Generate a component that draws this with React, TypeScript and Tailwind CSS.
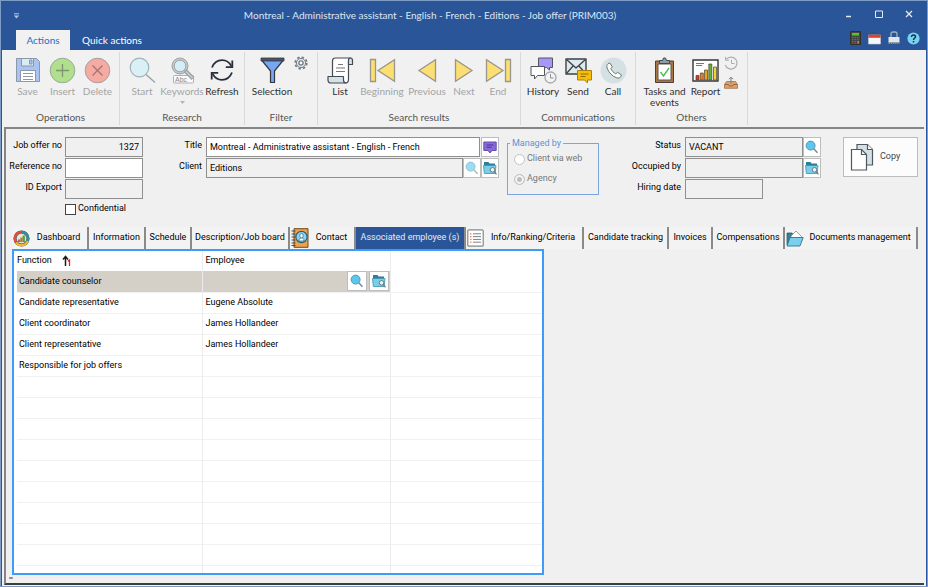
import React from 'react';

const UI = "font-['Lato','Open_Sans',sans-serif]";
const FORM = "font-['Roboto','Noto_Sans',sans-serif]";

/* ---------- icons ---------- */

function SaveIcon() {
  return (
    <svg width="26" height="27" viewBox="0 0 26 27" fill="none" stroke="#8c97a8">
      <path d="M1.5 1.5h20l3 3v20h-23z" fill="#a9c3f2" />
      <path d="M6.500 1.500h12v7.500h-12z" fill="#dcecf2" />
      <path d="M14.500 3h2.500v4h-2.500z" fill="#a9c3f2" />
      <path d="M5.500 13.500h15v11h-15z" fill="#fff" />
      <path d="M8 16.500h10M8 19.500h10M8 22.500h10" />
    </svg>
  );
}

function InsertIcon() {
  return (
    <svg width="27" height="27" viewBox="0 0 27 27" fill="none">
      <circle cx="13.500" cy="13.500" r="12.300" fill="#b0e08e" stroke="#9aa79a" />
      <path d="M13.500 7v13M7 13.500h13" stroke="#7d9570" strokeWidth="1.300" />
    </svg>
  );
}

function DeleteIcon() {
  return (
    <svg width="27" height="27" viewBox="0 0 27 27" fill="none">
      <circle cx="13.500" cy="13.500" r="12.300" fill="#f5aaa2" stroke="#aa9c9c" />
      <path d="M8.500 8.500l10 10M18.500 8.500l-10 10" stroke="#a07575" strokeWidth="1.300" />
    </svg>
  );
}

function StartIcon() {
  return (
    <svg width="27" height="27" viewBox="0 0 27 27" fill="none">
      <path d="M17 17.500l9 8" stroke="#9aa5ab" strokeWidth="1.500" />
      <circle cx="10.500" cy="10.500" r="9.300" fill="#d8f0f6" stroke="#9fb2ba" strokeWidth="1.200" />
    </svg>
  );
}

function KeywordsIcon() {
  return (
    <svg width="27" height="27" viewBox="0 0 27 27" fill="none">
      <circle cx="11" cy="9" r="8" fill="#c3c8cb" stroke="#a0a6aa" />
      <circle cx="11" cy="9" r="5.800" fill="#d3eef6" stroke="#a0a6aa" />
      <rect x="4.500" y="18.500" width="20" height="7.500" rx="1" fill="#fafafa" stroke="#b0b0b0" />
      <text x="6" y="25" fontSize="7" fill="#888" fontFamily="Liberation Sans, sans-serif">Abc</text>
      <path d="M16 13.500l8 8" stroke="#9da2a5" strokeWidth="4" />
      <path d="M17 14.500l6.500 6.500" stroke="#c9cdcf" strokeWidth="1.500" />
    </svg>
  );
}

function RefreshIcon() {
  return (
    <svg width="24" height="24" viewBox="0 0 24 24" fill="none" stroke="#27303a" strokeWidth="1.800">
      <path d="M2 9.500C4 4.500 8 2.200 12 2.200c4.200 0 7.500 2.300 9.300 6" />
      <path d="M22.300 2.500v6.700h-6.500" />
      <path d="M22 14.500c-2 5-6 7.300-10 7.300-4.200 0-7.500-2.300-9.300-6" />
      <path d="M1.700 21.500v-6.700h6.500" />
    </svg>
  );
}

function FilterIcon() {
  return (
    <svg width="25" height="27" viewBox="0 0 25 27" fill="none" stroke="#35383f" strokeLinejoin="round">
      <path d="M2 3.500h21l-8.500 10.500v11.500h-4V14z" fill="#76a7f2" strokeWidth="1.200" />
      <path d="M1 1h23v3H1z" fill="#4a5468" strokeWidth=".8" />
    </svg>
  );
}

function GearIcon() {
  return (
    <svg width="14" height="14" viewBox="0 0 14 14" fill="none" stroke="#737b82">
      <circle cx="7" cy="7" r="5.800" strokeWidth="1.700" strokeDasharray="2.400 2.150" />
      <circle cx="7" cy="7" r="4.600" fill="#e4ebee" strokeWidth="1" />
      <circle cx="7" cy="7" r="2.100" fill="#fff" strokeWidth="1.400" />
    </svg>
  );
}

function ListIcon() {
  return (
    <svg width="27" height="27" viewBox="0 0 27 27" fill="none" stroke="#454b52" strokeWidth="1.200" strokeLinejoin="round">
      <path d="M5.500 19V4c0-2 1-3 3-3h15c-1.500.5-2 1.500-2 3v18c0 2.500-1 4-3 4z" fill="#fff" />
      <path d="M21.500 7.500h4V3.500c0-1.500-.8-2.500-2-2.500s-2 1-2 2.500z" fill="#d5e1e6" />
      <path d="M1 19.500h15.500V23c0 1.800.8 3 2.500 3H4c-2 0-3-1-3-3z" fill="#d5e1e6" />
      <path d="M11 7.500h5M9 11h9M9 14.500h9" stroke="#777" />
    </svg>
  );
}

function NavIcon({ kind }: { kind: 'first' | 'prev' | 'next' | 'last' }) {
  const bar = kind === 'first' || kind === 'last';
  const flip = kind === 'next' || kind === 'last';
  return (
    <svg width={bar ? 27 : 20} height="25" viewBox={bar ? '0 0 27 25' : '7 0 20 25'} fill="#fbdf72" stroke="#99968c" strokeWidth="1.300">
      <g transform={flip ? (bar ? 'matrix(-1 0 0 1 27 0)' : 'matrix(-1 0 0 1 34 0)') : undefined}>
        {bar && <path d="M1.500 1.500h5v22h-5z" />}
        <path d="M25.500 1.800v21.400L9 12.500z" />
      </g>
    </svg>
  );
}

function HistoryIcon() {
  return (
    <svg width="27" height="27" viewBox="0 0 27 27" fill="none" stroke="#50565c" strokeLinejoin="round">
      <path d="M8.500 1h14v9.500h-3v2.500l-3-2.500h-8z" fill="#a996fa" />
      <path d="M1 9.500h13.500v9H7.500l-3 3.500v-3.500H1z" fill="#fff" />
      <circle cx="20.500" cy="20.500" r="5.500" fill="#f3f3f3" stroke="#a3a8ac" strokeWidth="1.300" />
      <path d="M20.500 17v4h3" stroke="#8c9094" />
    </svg>
  );
}

function SendIcon() {
  return (
    <svg width="27" height="27" viewBox="0 0 27 27" fill="none" stroke="#3c4248" strokeLinejoin="round">
      <path d="M1 2h20v15H1z" fill="#dfe9ee" strokeWidth="1.400" />
      <path d="M1.500 2.500L11 11l9.500-8.500M1.500 16.500l7-8M20.500 16.500l-7-8" strokeWidth="1.300" />
      <path d="M12.500 13.500h14v9.500h-4v3l-3-3h-7z" fill="#f7bd07" stroke="#a8810c" />
      <path d="M15.500 17h8M15.500 19.500h5" stroke="#8a6a08" />
    </svg>
  );
}

function CallIcon() {
  return (
    <svg width="27" height="27" viewBox="0 0 27 27" fill="none">
      <circle cx="13.500" cy="13.500" r="13" fill="#d5e0e4" />
      <path
        d="M8 6.800l1.800-.9 2.600 4-1.600 1.700c1.200 2.400 2.700 4 5 5.200l1.800-1.500 3.900 2.700-.9 1.900c-.7 1.200-2.200 1.500-3.700 1-4.700-1.700-8.200-5.200-9.800-9.900-.5-1.700-.3-3.400.9-4.200z"
        fill="#fff"
        stroke="#647c64"
        strokeLinejoin="round"
      />
    </svg>
  );
}

function TasksIcon() {
  return (
    <svg width="21" height="27" viewBox="0 0 21 27" fill="none">
      <path d="M1.500 4h18v21.500h-18z" fill="#a87543" stroke="#4c4038" />
      <path d="M4 7h13v16H4z" fill="#fff" stroke="#66584d" />
      <path d="M5.500 6.500v-3h3l1-2.500h2l1 2.500h3v3z" fill="#8d9ca5" stroke="#424a50" />
      <path d="M6.500 15l3 4 5.500-8" stroke="#4fc04f" strokeWidth="1.400" />
    </svg>
  );
}

function ReportIcon() {
  return (
    <svg width="27" height="23" viewBox="0 0 27 23" fill="none">
      <path d="M1 1h25v21H1z" fill="#fff" stroke="#34373a" strokeWidth="1.400" />
      <path d="M4 4.500h8M4 6.500h6" stroke="#72787c" />
      <g stroke="#4a4034" strokeWidth=".7">
        <path d="M4 16.500h3V21H4z" fill="#d93a2b" />
        <path d="M8.300 14h3v7h-3z" fill="#ee7d26" />
        <path d="M12.500 11h3v10h-3z" fill="#e6a817" />
        <path d="M16.800 5h3v16h-3z" fill="#5fb535" />
        <path d="M21.500 8h3v13h-3z" fill="#f4d33a" />
      </g>
    </svg>
  );
}

function ClockBackIcon() {
  return (
    <svg width="14" height="14" viewBox="0 0 14 14" fill="none" stroke="#adadad">
      <path d="M2.300 3.300A6 6 0 1 1 1.300 9" strokeWidth="1.200" />
      <path d="M1.500.8v3.400h3.500M7.500 3.800v3.700h3" />
    </svg>
  );
}

function TrayIcon() {
  return (
    <svg width="14" height="13" viewBox="0 0 14 13" fill="none">
      <path d="M2.500 5.500h9l2 3v3.800H.5V8.500z" fill="#e0a068" stroke="#9c7350" strokeWidth=".8" />
      <path d="M.8 8.500h3.700l1 1.500h3l1-1.500h3.700" stroke="#80573a" strokeWidth=".8" />
      <path d="M7 7.500v-6M5 3.200l2-2 2 2" stroke="#7a7a7a" />
    </svg>
  );
}

function CalculatorIcon() {
  return (
    <svg width="11" height="14" viewBox="0 0 11 14">
      <path d="M.5.500h10v13H.5z" fill="#454647" stroke="#33302c" />
      <path d="M2 2h7v2.500H2z" fill="#59c232" />
      <path d="M2 6.500h7M2 8.500h7M2 10.500h7M2 12.200h7" stroke="#6e7072" strokeWidth=".8" strokeDasharray="1.500 1" />
      <path d="M7.500 10h1.500v2.500H7.500z" fill="#c58336" />
    </svg>
  );
}

function CalendarIcon() {
  return (
    <svg width="13" height="14" viewBox="0 0 13 14" fill="none">
      <path d="M1 4.500L6.500 1 12 4.500" stroke="#3d4654" />
      <path d="M.5 4h12v9H.5z" fill="#f7f7f7" stroke="#c9c9c9" strokeWidth=".6" />
      <path d="M.3 3.800h12.400v3H.3z" fill="#e0402f" />
    </svg>
  );
}

function LockIcon() {
  return (
    <svg width="12" height="14" viewBox="0 0 12 14" fill="none">
      <path d="M3 6.500V3c0-1.300.8-2 2-2h2c1.200 0 2 .7 2 2v3.500" stroke="#9eb0be" strokeWidth="1.300" />
      <path d="M.5 6h11v5.500H.5z" fill="#dfe7ec" />
      <path d="M.5 12h11" stroke="#b9a05a" strokeWidth="1.600" strokeDasharray="1.500 .6" />
    </svg>
  );
}

function HelpIcon() {
  return (
    <svg width="13" height="13" viewBox="0 0 13 13" fill="none">
      <circle cx="6.500" cy="6.500" r="6.100" fill="#76d3f3" />
      <path d="M4.500 5c0-1.300.8-2 2-2s2 .8 2 1.800c0 1.400-2 1.500-2 3.100M6.500 9v1.400" stroke="#1d2f42" strokeWidth="1.500" />
    </svg>
  );
}

function LensIcon({ dim = false }: { dim?: boolean }) {
  return (
    <svg width="14" height="14" viewBox="0 0 14 14" fill="none" className={dim ? 'opacity-60' : ''}>
      <path d="M8.500 8.500l4 4.200" stroke="#76868f" strokeWidth="1.400" />
      <circle cx="5.600" cy="5.600" r="4.500" fill="#5cc6ef" stroke="#4b93ae" strokeWidth=".9" />
    </svg>
  );
}

function FolderLensIcon() {
  return (
    <svg width="14" height="14" viewBox="0 0 14 14" fill="none">
      <path d="M1 1h4.500l1 1.500H12v3H1z" fill="#2e7f96" />
      <path d="M.5 4.500h12.500l-.8 8H1.300z" fill="#77cfea" stroke="#3e95ad" strokeWidth=".8" />
      <circle cx="9.500" cy="8.800" r="2.300" fill="#e3f4f9" stroke="#6d7d85" />
      <path d="M11.200 10.500l2.300 2.800" stroke="#6d7d85" strokeWidth="1.200" />
    </svg>
  );
}

function NoteIcon() {
  return (
    <svg width="14" height="13" viewBox="0 0 14 13" fill="none">
      <path d="M.8 1h12.400v8.500H9L7 12 5 9.500H.8z" fill="#8a68dd" stroke="#5c45a0" strokeWidth=".9" />
      <path d="M3.500 4h7M3.500 6.300h5" stroke="#4a3590" />
    </svg>
  );
}

function CopyIcon() {
  return (
    <svg width="24" height="28" viewBox="0 0 24 28" fill="none" stroke="#50585e" strokeWidth="1.200">
      <path d="M7 1.500h10.500l5 5V22H7z" fill="#d3e0e5" />
      <path d="M17.500 1.500v5h5" fill="#fff" />
      <path d="M1.500 6.500h10l5 5V27h-15z" fill="#fff" />
      <path d="M11.500 6.500v5h5" />
    </svg>
  );
}

function DashboardIcon() {
  return (
    <svg width="17" height="17" viewBox="0 0 17 17" fill="none">
      <circle cx="8.500" cy="8.500" r="8" fill="#44484c" />
      <path d="M8.500 1.900a6.600 6.600 0 0 1 6.200 8.900" stroke="#2f8fa8" strokeWidth="2.400" />
      <path d="M14.700 10.800A6.600 6.600 0 0 1 3 12.300" stroke="#f2b92f" strokeWidth="2.400" />
      <path d="M3 12.300A6.600 6.600 0 0 1 8.500 1.900" stroke="#e4503f" strokeWidth="2.400" />
      <circle cx="8.500" cy="8.500" r="5.200" fill="#e9e6dc" stroke="#606468" strokeWidth=".7" />
      <path d="M5 9.500h2.300V12H5z" fill="#e4503f" />
      <path d="M7.300 7.500h2.300V12H7.300z" fill="#c0703f" />
      <path d="M9.600 5.500h2.300V12H9.600z" fill="#4da641" />
    </svg>
  );
}

function ContactIcon() {
  return (
    <svg width="18" height="20" viewBox="0 0 18 20" fill="none">
      <path d="M3 .7h14v18.600H3z" fill="#efa04a" stroke="#6b4a26" />
      <path d="M.5 3h4M.5 6h4M.5 9h4M.5 12h4M.5 15h4M.5 17.500h4" stroke="#4a4a4a" />
      <circle cx="10.500" cy="9" r="5.600" fill="#8fd3f0" stroke="#23627e" strokeWidth="1.200" />
      <path d="M8 13c0-2.200 1-3 2.500-3s2.500.8 2.500 3z" fill="#fff" stroke="#23627e" strokeWidth=".7" />
      <ellipse cx="10.500" cy="7.700" rx="1.700" ry="2.200" fill="#fff" stroke="#23627e" strokeWidth=".7" />
    </svg>
  );
}

function CriteriaIcon() {
  return (
    <svg width="17" height="18" viewBox="0 0 17 18" fill="none">
      <rect x=".8" y=".8" width="15.400" height="16.400" rx="1" fill="#fff" stroke="#85888a" strokeWidth="1.200" />
      <path d="M6 4.800h8M6 7.600h8M6 10.400h8M6 13.200h8" stroke="#7d8184" />
      <path d="M3 4.800h1.500M3 7.600h1.500M3 10.400h1.500M3 13.200h1.500" stroke="#e88855" strokeWidth="1.300" />
    </svg>
  );
}

function DocumentsIcon() {
  return (
    <svg width="18" height="17" viewBox="0 0 18 17" fill="none" strokeLinejoin="round">
      <path d="M1 3h5l1.500 2H13v10H1z" fill="#2f8298" stroke="#275f70" strokeWidth=".8" />
      <path d="M5 6l5-5 5.500 5.500V10H5z" fill="#fff" stroke="#7b868b" strokeWidth=".8" />
      <path d="M4 7.500h13.200L14 16H1z" fill="#79d0ee" stroke="#33758a" strokeWidth=".9" />
    </svg>
  );
}

function SortIcon() {
  return (
    <svg width="10" height="12" viewBox="0 0 10 12" fill="none">
      <path d="M3.500 11V2M1 4.500l2.500-3 2.500 3" stroke="#1b1b1b" strokeWidth="1.500" />
      <path d="M5.800 6.200l1.700-1.200v6" stroke="#e01f1f" strokeWidth="1.300" />
    </svg>
  );
}

/* ---------- ribbon ---------- */

function Tool({ icon, label, width, dim = false, children }: {
  icon: React.ReactNode;
  label: string;
  width: string;
  dim?: boolean;
  children?: React.ReactNode;
}) {
  return (
    <button
      type="button"
      disabled={dim}
      className={`flex shrink-0 flex-col items-center ${width} ${dim ? 'text-[#a4a4a4]' : 'text-[#303030]'}`}
    >
      <span className="flex h-7 items-center justify-center">{icon}</span>
      <span className="mt-0.5 text-[10px] leading-[11px]">{label}</span>
      {children}
    </button>
  );
}

function Group({ label, width, children }: { label: string; width: string; children: React.ReactNode }) {
  return (
    <section aria-label={label} className={`flex shrink-0 flex-col border-r border-[#d9d9d9] ${width}`}>
      <div className="flex h-[57px] items-start justify-center">{children}</div>
      <div className="text-center text-[10px] leading-4 text-[#555]">{label}</div>
    </section>
  );
}

/* ---------- form ---------- */

const label = 'whitespace-nowrap text-right leading-4 text-black';
const box = 'h-5 min-w-0 border border-[#8f8f8f] px-[3px] text-black';
const square = 'flex h-5 w-[18px] shrink-0 items-center justify-center border border-[#bdbdbd] bg-white';

const tabs: { name: string; width: string; icon?: React.ReactNode }[] = [
  { name: 'Dashboard', width: 'w-[77px]', icon: <DashboardIcon /> },
  { name: 'Information', width: 'w-[57px]' },
  { name: 'Schedule', width: 'w-[46px]' },
  { name: 'Description/Job board', width: 'w-[98px]' },
  { name: 'Contact', width: 'w-[66px]', icon: <ContactIcon /> },
  { name: 'Associated employee (s)', width: 'w-[110px]' },
  { name: 'Info/Ranking/Criteria', width: 'w-[118px]', icon: <CriteriaIcon /> },
  { name: 'Candidate tracking', width: 'w-[85px]' },
  { name: 'Invoices', width: 'w-[44px]' },
  { name: 'Compensations', width: 'w-[72px]' },
  { name: 'Documents management', width: 'w-[133px]', icon: <DocumentsIcon /> },
];

const rows = [
  ['Candidate counselor', ''],
  ['Candidate representative', 'Eugene Absolute'],
  ['Client coordinator', 'James Hollandeer'],
  ['Client representative', 'James Hollandeer'],
  ['Responsible for job offers', ''],
  ...Array.from({ length: 9 }, () => ['', '']),
];

export default function App() {
  return (
    <div className={`flex min-h-screen flex-col border border-[#7f9cc4] bg-[#2a5699] text-[10px] ${UI}`}>
      {/* title bar */}
      <header className="flex h-[49px] flex-col text-white">
        <div className="flex h-[29px] items-center">
          <div className="flex w-20 pl-3">
            <button type="button" aria-label="Customize toolbar">
              <svg width="7" height="6" viewBox="0 0 7 6" fill="none">
                <path d="M1 .8h5" stroke="#b5c4dc" />
                <path d="M.8 2.500h5.400L3.500 5.500z" fill="#b5c4dc" />
              </svg>
            </button>
          </div>
          <h1 className="flex-1 text-center text-[10px] text-[#dce6f4]">
            Montreal - Administrative assistant - English - French - Editions - Job offer (PRIM003)
          </h1>
          <div className="flex w-[148px] items-center justify-end gap-[22px] pb-1 pr-3.5">
            <button type="button" aria-label="Minimize">
              <svg width="8" height="10" viewBox="0 0 8 10"><path d="M1 7.500h5" stroke="#e3eaf4" strokeWidth="1.500" /></svg>
            </button>
            <button type="button" aria-label="Maximize">
              <svg width="8" height="8" viewBox="0 0 8 8" fill="none"><path d="M.5 1h7v6.500h-7z" stroke="#e3eaf4" /></svg>
            </button>
            <button type="button" aria-label="Close">
              <svg width="8" height="8" viewBox="0 0 8 8"><path d="M1 1l6 6M7 1L1 7" stroke="#e3eaf4" strokeWidth="1.300" /></svg>
            </button>
          </div>
        </div>
        <nav className="flex h-5 pl-[15px] pr-[7px]">
          <button type="button" className="w-[54px] bg-[#f1f1f1] text-[#1f6fc4]">Actions</button>
          <button type="button" className="w-[84px]">Quick actions</button>
          <div className="ml-auto flex items-center gap-[7px] pb-1">
            <button type="button" aria-label="Calculator"><CalculatorIcon /></button>
            <button type="button" aria-label="Calendar"><CalendarIcon /></button>
            <button type="button" aria-label="Lock"><LockIcon /></button>
            <button type="button" aria-label="Help"><HelpIcon /></button>
          </div>
        </nav>
      </header>

      <div className="mx-px flex flex-1 flex-col bg-[#f1f1f1]">
        {/* ribbon */}
        <div className="flex h-[77px] overflow-hidden pb-0.5 pt-0.5">
          <Group label="Operations" width="w-[118px]">
            <div className="flex pl-1 pt-1">
              <Tool icon={<SaveIcon />} label="Save" width="w-[35px]" dim />
              <Tool icon={<InsertIcon />} label="Insert" width="w-[35px]" dim />
              <Tool icon={<DeleteIcon />} label="Delete" width="w-[35px]" dim />
            </div>
          </Group>
          <Group label="Research" width="w-[125px]">
            <div className="flex pt-1">
              <Tool icon={<StartIcon />} label="Start" width="w-10" dim />
              <Tool icon={<KeywordsIcon />} label="Keywords" width="w-10" dim>
                <svg width="5" height="3" viewBox="0 0 5 3" className="mt-1"><path d="M0 0h5L2.500 3z" fill="#b5b5b5" /></svg>
              </Tool>
              <Tool icon={<RefreshIcon />} label="Refresh" width="w-10" />
            </div>
          </Group>
          <Group label="Filter" width="w-[73px]">
            <div className="flex items-start pr-1 pt-1">
              <Tool icon={<FilterIcon />} label="Selection" width="w-[44px]" />
              <button type="button" aria-label="Filter settings"><GearIcon /></button>
            </div>
          </Group>
          <Group label="Search results" width="w-[203px]">
            <div className="flex pt-1">
              <Tool icon={<ListIcon />} label="List" width="w-9" />
              <Tool icon={<NavIcon kind="first" />} label="Beginning" width="w-12" dim />
              <Tool icon={<NavIcon kind="prev" />} label="Previous" width="w-[42px]" dim />
              <Tool icon={<NavIcon kind="next" />} label="Next" width="w-8" dim />
              <Tool icon={<NavIcon kind="last" />} label="End" width="w-9" dim />
            </div>
          </Group>
          <Group label="Communications" width="w-[115px]">
            <div className="flex pt-1">
              <Tool icon={<HistoryIcon />} label="History" width="w-[35px]" />
              <Tool icon={<SendIcon />} label="Send" width="w-[35px]" />
              <Tool icon={<CallIcon />} label="Call" width="w-[35px]" />
            </div>
          </Group>
          <Group label="Others" width="w-[112px]">
            <div className="flex items-start pr-1 pt-1">
              <Tool icon={<TasksIcon />} label="Tasks and events" width="w-[46px]" />
              <Tool icon={<ReportIcon />} label="Report" width="w-9" />
              <div className="flex flex-col gap-1.5">
                <button type="button" disabled aria-label="Recent"><ClockBackIcon /></button>
                <button type="button" disabled aria-label="Archive"><TrayIcon /></button>
              </div>
            </div>
          </Group>
        </div>

        {/* record */}
        <main className={`mx-0.5 mb-px flex flex-1 flex-col border-2 border-r-0 border-[#858585] border-b-[#3c3f3c] bg-[#f0f0f0] text-[9px] ${FORM}`}>
          <form className="flex items-start pt-2">
            <div className="grid grid-cols-[56px_78px] gap-x-[3px] gap-y-px">
              <label htmlFor="offer" className={label}>Job offer no</label>
              <input id="offer" readOnly defaultValue="1327" className={`${box} bg-[#f0f0f0] text-right`} />
              <label htmlFor="ref" className={label}>Reference no</label>
              <input id="ref" className={`${box} bg-white`} />
              <label htmlFor="export" className={label}>ID Export</label>
              <input id="export" readOnly className={`${box} bg-[#f0f0f0]`} />
              <label className="col-start-2 flex h-4 items-center gap-0.5 pt-0.5 text-black">
                <input type="checkbox" className="size-[11px] appearance-none border border-[#444] bg-white" />
                Confidential
              </label>
            </div>

            <div className="ml-[35px] grid flex-1 grid-cols-[24px_1fr] gap-x-1 gap-y-px">
              <label htmlFor="title" className={label}>Title</label>
              <div className="flex gap-px">
                <input id="title" defaultValue="Montreal - Administrative assistant - English - French" className={`${box} flex-1 bg-white`} />
                <button type="button" aria-label="Title note" className={square}><NoteIcon /></button>
              </div>
              <label htmlFor="client" className={label}>Client</label>
              <div className="flex">
                <input id="client" readOnly defaultValue="Editions" className={`${box} flex-1 bg-[#f0f0f0]`} />
                <button type="button" disabled aria-label="Find client" className={square}><LensIcon dim /></button>
                <button type="button" aria-label="Open client" className={square}><FolderLensIcon /></button>
              </div>
            </div>

            <fieldset className="ml-2 h-[58px] w-[92px] border border-[#7ba6db] pl-1.5 text-[#777]">
              <legend className="-ml-1 px-0.5 leading-3 text-[#5b93d6]">Managed by</legend>
              <label className="flex h-5 items-center gap-0.5">
                <input type="radio" name="managed" disabled className="size-[11px] appearance-none rounded-full border border-[#c2c2c2] bg-white" />
                Client via web
              </label>
              <label className="flex h-5 items-center gap-0.5">
                <input
                  type="radio"
                  name="managed"
                  disabled
                  defaultChecked
                  className="size-[11px] appearance-none rounded-full border border-[#c2c2c2] bg-[#bdbdbd] shadow-[inset_0_0_0_2px_#f6f6f6]"
                />
                Agency
              </label>
            </fieldset>

            <div className="ml-7 grid grid-cols-[54px_136px] gap-x-1 gap-y-px">
              <label htmlFor="status" className={label}>Status</label>
              <div className="flex">
                <input id="status" readOnly defaultValue="VACANT" className={`${box} flex-1 bg-[#f0f0f0]`} />
                <button type="button" aria-label="Find status" className={square}><LensIcon /></button>
              </div>
              <label htmlFor="occupied" className={label}>Occupied by</label>
              <div className="flex">
                <input id="occupied" readOnly className={`${box} flex-1 bg-[#f0f0f0]`} />
                <button type="button" aria-label="Open employee" className={square}><FolderLensIcon /></button>
              </div>
              <label htmlFor="hiring" className={label}>Hiring date</label>
              <input id="hiring" readOnly className={`${box} w-[78px] bg-[#f0f0f0]`} />
            </div>

            <button type="button" className="ml-[22px] mr-1.5 flex h-10 w-[75px] items-center gap-1.5 border border-[#bcbcbc] bg-[#fcfcfc] pl-1.5 text-[#444]">
              <CopyIcon />
              Copy
            </button>
          </form>

          <div role="tablist" className="mt-[11px] flex pl-1.5 pr-1">
            {tabs.map((t) => {
              const on = t.name.startsWith('Associated');
              return (
                <button
                  key={t.name}
                  type="button"
                  role="tab"
                  aria-selected={on}
                  className={`flex h-[22px] items-center whitespace-nowrap border-r-2 border-[#8a8a8a] ${t.width} ${
                    on ? 'bg-[#2a5699] text-[#e4ebf5]' : 'bg-[#f3f3f3] text-black'
                  }`}
                >
                  {t.icon && <span className="shrink-0 pl-px">{t.icon}</span>}
                  <span className="flex-1 text-center">{t.name}</span>
                </button>
              );
            })}
          </div>

          <div className="ml-1.5 w-[58%] border-2 border-[#3f9bfa] bg-white pl-[3px]">
            <table className="w-full table-fixed border-collapse text-black">
              <colgroup>
                <col className="w-[185px]" />
                <col className="w-[188px]" />
                <col />
              </colgroup>
              <thead>
                <tr className="h-5 text-left">
                  <th className="border-r border-[#ececec] p-0 font-normal">
                    <span className="flex items-center gap-2.5">Function <SortIcon /></span>
                  </th>
                  <th className="border-r border-[#ececec] p-0 pl-[3px] font-normal">Employee</th>
                  <th aria-label="Blank" className="p-0" />
                </tr>
              </thead>
              <tbody>
                {rows.map(([fn, emp], i) => (
                  <tr key={i} className="h-[21px] border-b border-[#f1f1f1]">
                    <td className={`border-r border-[#ececec] p-0 pl-0.5 ${i === 0 ? 'bg-[#d4cfc7]' : ''}`}>{fn}</td>
                    <td className={`border-r border-[#ececec] p-0 pl-[3px] ${i === 0 ? 'bg-[#d4cfc7]' : ''}`}>
                      {i === 0 ? (
                        <span className="flex justify-end gap-0.5 pr-px">
                          <button type="button" aria-label="Find employee" className="flex h-5 w-5 items-center justify-center border border-[#bdbdbd] bg-white"><LensIcon /></button>
                          <button type="button" aria-label="Open employee file" className="flex h-5 w-5 items-center justify-center border border-[#bdbdbd] bg-white"><FolderLensIcon /></button>
                        </span>
                      ) : emp}
                    </td>
                    <td className="p-0" />
                  </tr>
                ))}
                <tr className="h-2">
                  <td className="border-r border-[#ececec] p-0" />
                  <td className="border-r border-[#ececec] p-0" />
                  <td className="p-0" />
                </tr>
              </tbody>
            </table>
          </div>
          <div className="ml-[3px] mt-0.5 h-0.5 w-1 rounded-full bg-[#8a8a8a]" />
        </main>
      </div>
    </div>
  );
}
